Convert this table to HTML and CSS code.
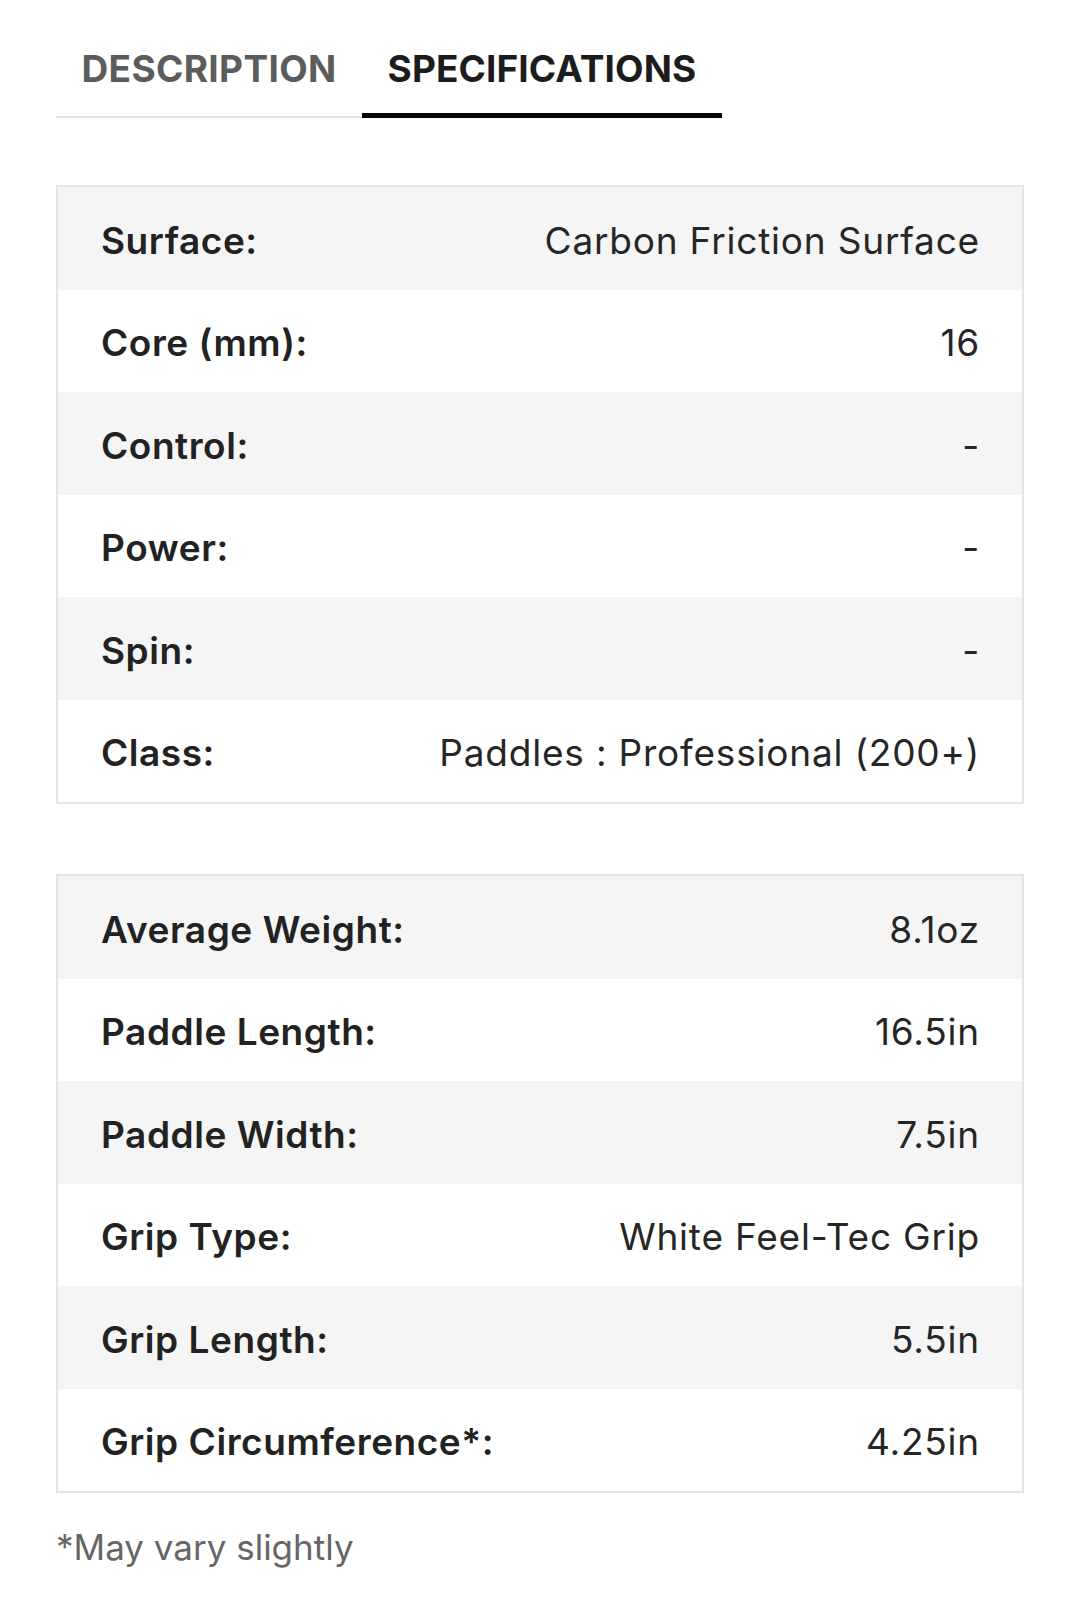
FILE: index.html
```html
<!DOCTYPE html>
<html lang="en">
<head>
<meta charset="utf-8">
<title>Specifications</title>
<link rel="stylesheet" href="styles.css">
</head>
<body>
<div class="page">
  <div class="tabs">
    <div class="tab">DESCRIPTION</div>
    <div class="tab active">SPECIFICATIONS</div>
  </div>

  <div class="spec-table first">
    <div class="row"><span class="label">Surface:</span><span class="value">Carbon Friction Surface</span></div>
    <div class="row"><span class="label">Core (mm):</span><span class="value">16</span></div>
    <div class="row"><span class="label">Control:</span><span class="value">-</span></div>
    <div class="row"><span class="label">Power:</span><span class="value">-</span></div>
    <div class="row"><span class="label">Spin:</span><span class="value">-</span></div>
    <div class="row"><span class="label">Class:</span><span class="value">Paddles : Professional (200+)</span></div>
  </div>

  <div class="spec-table second">
    <div class="row"><span class="label">Average Weight:</span><span class="value">8.1oz</span></div>
    <div class="row"><span class="label">Paddle Length:</span><span class="value">16.5in</span></div>
    <div class="row"><span class="label">Paddle Width:</span><span class="value">7.5in</span></div>
    <div class="row"><span class="label">Grip Type:</span><span class="value">White Feel-Tec Grip</span></div>
    <div class="row"><span class="label">Grip Length:</span><span class="value">5.5in</span></div>
    <div class="row"><span class="label">Grip Circumference*:</span><span class="value">4.25in</span></div>
  </div>

  <p class="note">*May vary slightly</p>
</div>
</body>
</html>
```

FILE: styles.css
```css
html, body {
  margin: 0;
  padding: 0;
  background: #ffffff;
}

body {
  font-family: "Inter", "Lato", "Liberation Sans", sans-serif;
  color: #222222;
}

.page {
  width: 968px;
  margin-left: 56px;
  padding-top: 45px;
}

.tabs {
  display: flex;
  align-items: flex-start;
}

.tab {
  box-sizing: border-box;
  height: 73px;
  padding: 1px 25.5px 0 25.5px;
  font-size: 37px;
  line-height: 46px;
  font-weight: 700;
  letter-spacing: 0.35px;
  color: #5c5c5c;
  border-bottom: 2px solid #e2e2e2;
}

.tab.active {
  letter-spacing: 0.1px;
  color: #1c1c1c;
  border-bottom: 5px solid #000000;
}

.spec-table {
  border: 2px solid #e4e4e4;
}

.spec-table.first {
  margin-top: 67px;
}

.spec-table.second {
  margin-top: 70px;
}

.row {
  box-sizing: border-box;
  display: flex;
  justify-content: space-between;
  align-items: center;
  height: 102.5px;
  padding: 5px 42px 0 43px;
  font-size: 37px;
  line-height: 46px;
}

.row:nth-child(odd) {
  background: #f5f5f5;
}

.label {
  font-weight: 600;
  letter-spacing: 0.55px;
  color: #222222;
}

.value {
  font-weight: 400;
  letter-spacing: 0.8px;
  color: #262626;
}

.note {
  margin: 31px 0 0 0;
  font-size: 35px;
  line-height: 46px;
  color: #666666;
}
```
